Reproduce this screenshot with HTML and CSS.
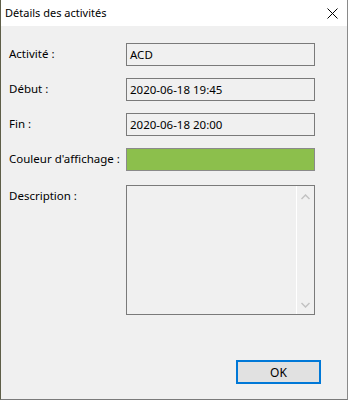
FILE: index.html
```html
<!DOCTYPE html>
<html lang="fr">
<head>
  <meta charset="UTF-8">
  <title>Détails des activités</title>
  <link rel="stylesheet" href="styles.css">
</head>
<body>
  <div id="window">
    <div id="titlebar">
      <span id="title">Détails des activités</span>
      <button id="close-btn" aria-label="Fermer">
        <svg width="11" height="11" viewBox="0 0 11 11">
          <path d="M0.5 0.5 L10.5 10.5 M10.5 0.5 L0.5 10.5" stroke="#000" stroke-width="1" fill="none"/>
        </svg>
      </button>
    </div>
    <div id="content">
      <div class="form-grid">
        <label class="field-label">Activité :</label>
        <div class="field-box">ACD</div>

        <label class="field-label">Début :</label>
        <div class="field-box">2020-06-18 19:45</div>

        <label class="field-label">Fin :</label>
        <div class="field-box">2020-06-18 20:00</div>

        <label class="field-label">Couleur d'affichage :</label>
        <div class="field-box color-box"></div>

        <label class="field-label desc-label">Description :</label>
        <div class="field-box memo-box">
          <div class="memo-text"></div>
          <div class="memo-scroll">
            <svg width="9" height="6" viewBox="0 0 9 6"><path d="M0.5 5 L4.5 1 L8.5 5" stroke="#c2c2c2" stroke-width="1.5" fill="none"/></svg>
            <svg width="9" height="6" viewBox="0 0 9 6"><path d="M0.5 1 L4.5 5 L8.5 1" stroke="#c2c2c2" stroke-width="1.5" fill="none"/></svg>
          </div>
        </div>
      </div>
      <div id="footer">
        <button id="ok-btn">OK</button>
      </div>
    </div>
  </div>
</body>
</html>
```

FILE: styles.css
```css
html, body {
  margin: 0;
  padding: 0;
}
body {
  font-family: 'Noto Sans', 'DejaVu Sans', sans-serif;
  font-size: 11.5px;
  color: #000;
  width: 348px;
  height: 400px;
  overflow: hidden;
}
#window {
  box-sizing: border-box;
  width: 348px;
  height: 400px;
  display: flex;
  flex-direction: column;
  background-color: #f0f0f0;
  border-left: 1px solid #5e5e48;
  border-right: 1px solid #8a8a8a;
  border-bottom: 1px solid #7a7a7a;
}
#titlebar {
  height: 26px;
  flex-shrink: 0;
  background-color: #fff;
  display: flex;
  align-items: center;
  justify-content: space-between;
  padding-left: 4px;
}
#title {
  font-size: 11px;
  line-height: 16px;
}
#close-btn {
  background: none;
  border: none;
  padding: 0;
  margin-right: 9px;
  width: 11px;
  height: 11px;
  display: flex;
}
#content {
  flex: 1;
  display: flex;
  flex-direction: column;
  padding: 17px 0 15px 8px;
}
.form-grid {
  display: grid;
  grid-template-columns: 117px 189px;
  grid-template-rows: 23px 23px 23px 23px 130px;
  row-gap: 12px;
}
.field-label {
  line-height: 20px;
  padding-top: 1px;
  white-space: nowrap;
}
.desc-label {
  margin-top: 2px;
}
.field-box {
  box-sizing: border-box;
  height: 23px;
  border: 1px solid #7a7a7a;
  background-color: #f0f0f0;
  padding: 0 3px;
  line-height: 21px;
  white-space: nowrap;
}
.color-box {
  background-color: #8cbf4c;
  border-color: #8a8a8a;
}
.memo-box {
  height: 130px;
  margin-top: 2px;
  padding: 0;
  display: flex;
}
.memo-text {
  flex: 1;
}
.memo-scroll {
  width: 17px;
  border-left: 1px solid #fff;
  display: flex;
  flex-direction: column;
  align-items: center;
  justify-content: space-between;
  padding: 8px 0 6px;
}
#footer {
  margin-top: auto;
  display: flex;
  justify-content: flex-end;
  padding-right: 26px;
}
#ok-btn {
  box-sizing: border-box;
  width: 85px;
  height: 24px;
  font-family: inherit;
  font-size: 12px;
  color: #000;
  background-color: #e1e1e1;
  border: 1px solid #0078d7;
  box-shadow: inset 0 0 0 1px #0078d7;
  padding: 0;
}
```
